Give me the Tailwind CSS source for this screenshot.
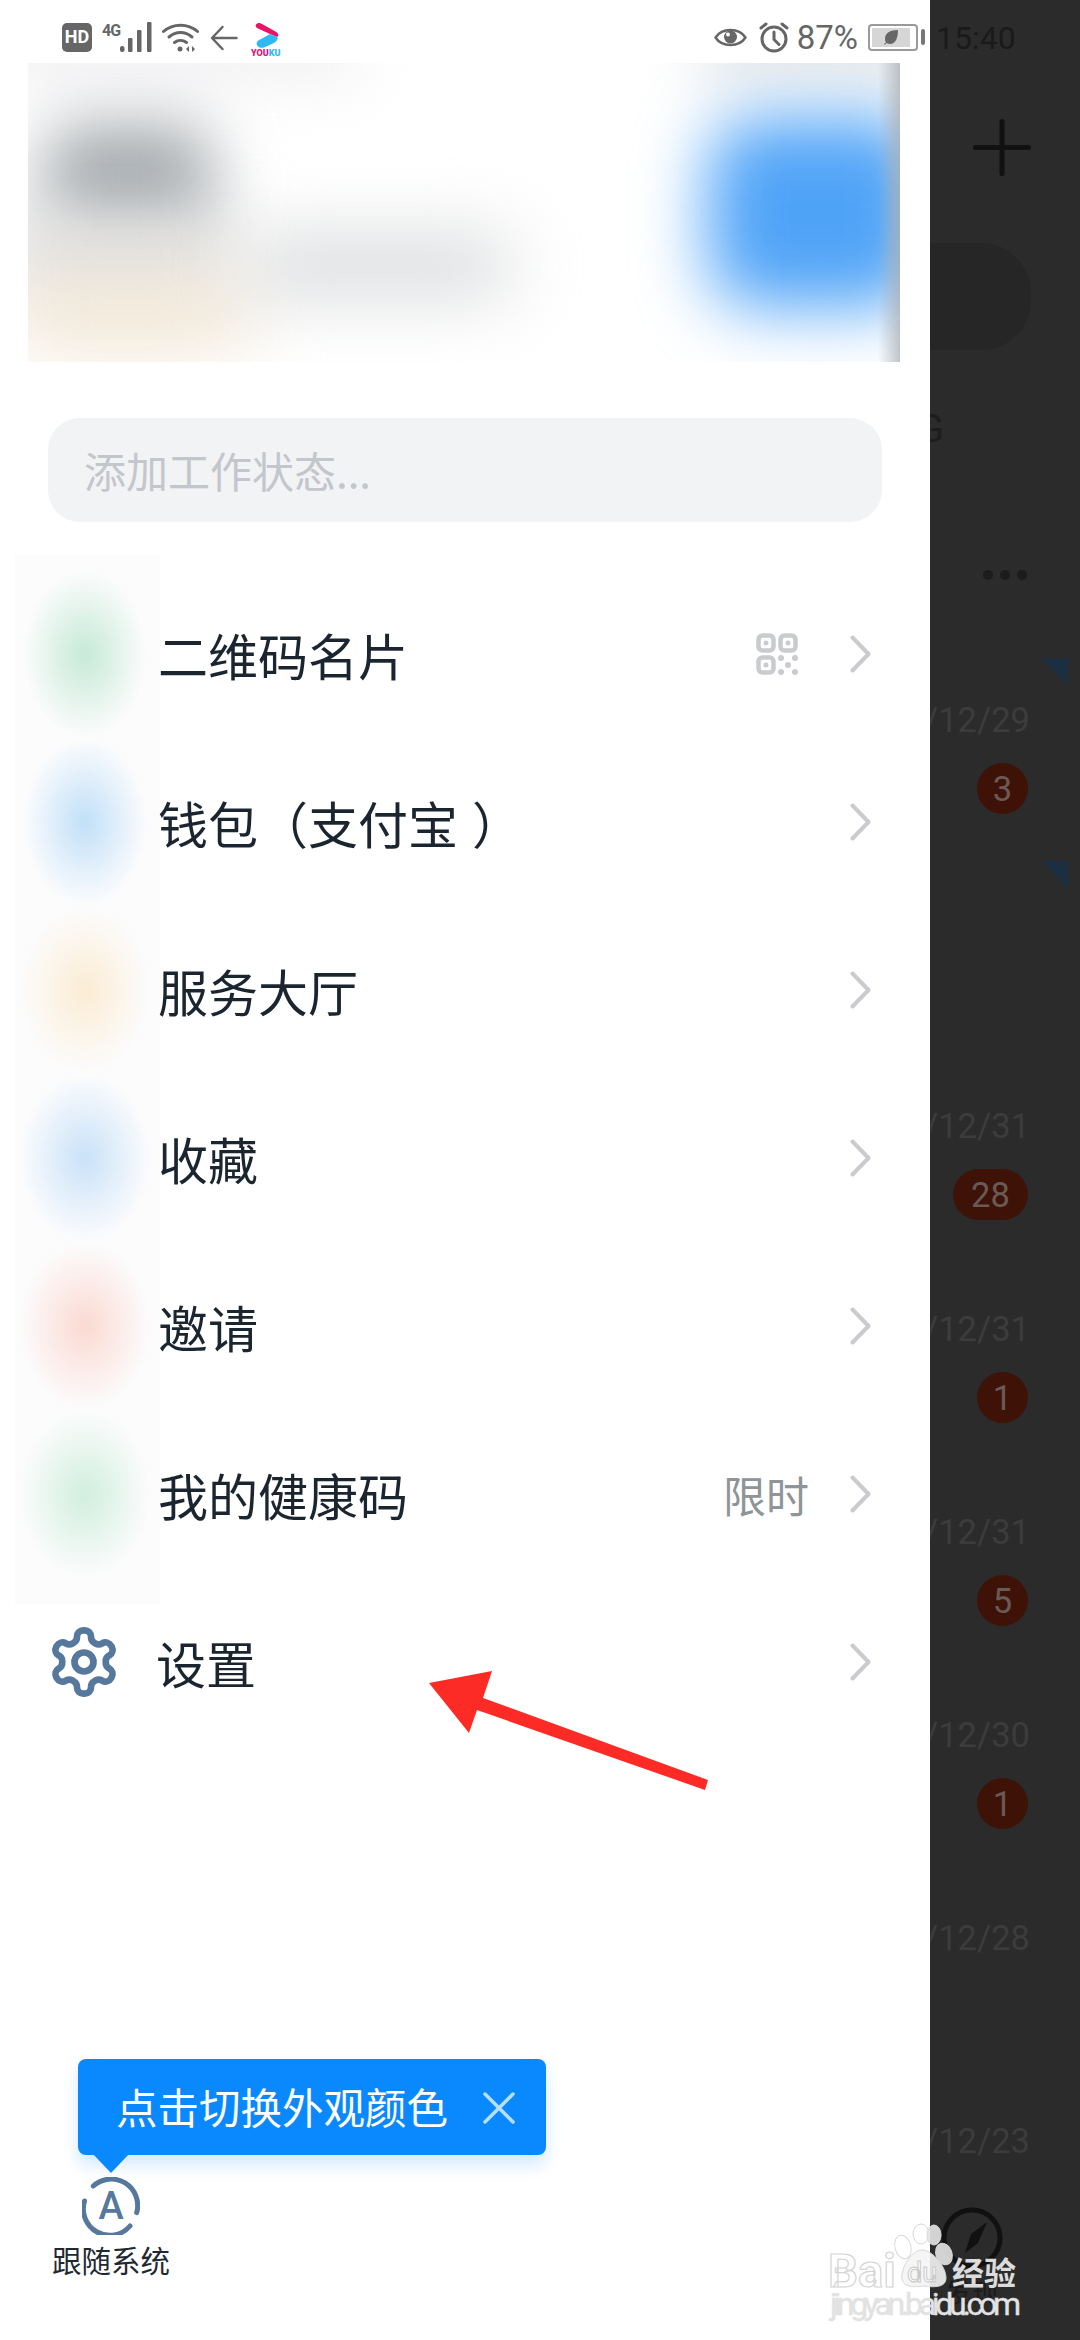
<!DOCTYPE html>
<html lang="zh-CN">
  <head>
    <meta charset="UTF-8" />
    <meta name="viewport" content="width=device-width, initial-scale=1.0" />
    <title>工作台菜单</title>
    <script src="https://cdn.jsdelivr.net/npm/@tailwindcss/browser@4"></script>
  </head>
  <body class="bg-white">
    <div class="relative flex w-[1080px] h-[2340px] overflow-hidden [font-family:'Noto_Sans_CJK_SC',sans-serif]">
      <!-- drawer -->
      <aside class="flex flex-col w-[930px] h-full bg-white">
        <!-- status bar, left and middle icons -->
        <div class="flex items-center h-[63px] pt-[12px] pl-[62px] pr-[5px] text-[#666] [font-family:Roboto,sans-serif]">
          <span class="flex items-center justify-center w-[30px] h-[29px] -mt-[1px] rounded-[5px] bg-[#666] text-white text-[18px] leading-none font-bold">HD</span>
          <span class="self-start mt-[11px] ml-[10px] w-[18px] text-[16px] leading-[15px] font-bold tracking-[-1px]">4G</span>
          <svg class="w-[32px] h-[30px] -mt-[1px]" viewBox="0 0 32 30" fill="#666">
            <rect x="0" y="24" width="4.500" height="6" rx="2" />
            <rect x="8" y="16" width="4.500" height="14" rx="1" />
            <rect x="17" y="8" width="4.500" height="22" rx="1" />
            <rect x="27" y="0" width="4.500" height="30" rx="1" />
          </svg>
          <svg class="w-[37px] h-[30px] ml-[10px]" viewBox="0 0 37 30" fill="none" stroke="#666" stroke-width="3" stroke-linecap="round">
            <path d="M1.500 8.500C11 0 26 0 35.500 8.500" />
            <path d="M7 14C14 8 23 8 30 14" />
            <path d="M12.500 19.500C16 16.800 21 16.800 24.500 19.500" />
            <circle cx="18" cy="26" r="2.500" fill="#666" stroke="none" />
            <path d="M27 23v6l-3-3zM30 23v6l3-3z" fill="#666" stroke="none" />
          </svg>
          <svg class="w-[28px] h-[26px] ml-[11px]" viewBox="0 0 28 26" fill="none" stroke="#666" stroke-width="2.500" stroke-linecap="round" stroke-linejoin="round">
            <path d="M12.500 2L2 13l10.500 11M2.500 13H26.500" />
          </svg>
          <svg class="w-[32px] h-[34px] ml-[12px] mt-[3px]" viewBox="0 0 32 34">
            <path d="M6 2.500C8 .5 9.500 .5 12 2L25.500 9.500C29 11.500 29 14 27 15L20 12L8 6.500C6 5.500 5 4 6 2.500z" fill="#ec1268" />
            <path d="M27 15C29 17 26 20 23 21.500L14 25.500C9 27 5.500 23 7 20C8 18 10 17.500 12 16.500L20 12z" fill="#2fb9f3" />
            <text x="1" y="33.500" font-size="9" font-weight="900" font-family="Roboto" fill="#e3127a">YOU<tspan fill="#2fb9f3">KU</tspan></text>
          </svg>
          <svg class="w-[33px] h-[25px] ml-auto" viewBox="0 0 33 25" fill="none" stroke="#666" stroke-width="2.500">
            <path d="M1.500 12.500C8 2.500 25 2.500 31.500 12.500C25 22.500 8 22.500 1.500 12.500z" stroke-linejoin="round" />
            <circle cx="16.500" cy="12" r="6.500" fill="#666" stroke="none" />
            <circle cx="14" cy="9.500" r="2" fill="#fff" stroke="none" />
          </svg>
          <svg class="w-[30px] h-[31px] ml-[12px] -mt-[1px]" viewBox="0 0 30 31" fill="none" stroke="#666" stroke-width="3" stroke-linecap="round">
            <circle cx="15" cy="17" r="12" />
            <path d="M15 10v7.500l5 5M2 6l5-4M28 6l-5-4" />
          </svg>
          <span class="ml-[8px] text-[33px] leading-none -mt-[1px]">87%</span>
          <span class="flex items-center justify-center ml-[10px] w-[50px] h-[27px] -mt-[1px] border-2 border-[#9a9a9a] rounded-[4px] p-[2px] pr-[6px]">
            <span class="flex items-center justify-center w-full h-full bg-[#d6d6d6]">
              <svg class="w-[16px] h-[16px]" viewBox="0 0 16 16" fill="#666"><path d="M15 1C7 1 2 4 2 10c0 1.500.5 2.500 1 3.500L1 15l.8.700L3.800 14C5 14.500 6 15 7 15c6 0 8-7 8-14z" /></svg>
            </span>
          </span>
          <span class="ml-[3px] w-[4px] h-[16px] -mt-[1px] rounded-[2px] bg-[#777]"></span>
        </div>

        <!-- blurred profile card -->
        <div class="relative mx-[28px] w-[872px] h-[299px] shrink-0 overflow-hidden bg-white">
          <div class="absolute -left-[30px] -top-[40px] w-[360px] h-[60px] bg-[#f1f1f3] blur-[30px]"></div>
          <div class="absolute left-[15px] top-[60px] w-[170px] h-[115px] rounded-[40px] bg-[#a6abaf] blur-[32px]"></div>
          <div class="absolute -left-[20px] top-[150px] w-[210px] h-[90px] bg-[#dfdfdf] blur-[34px]"></div>
          <div class="absolute -left-[10px] top-[215px] w-[230px] h-[70px] bg-[#f3e7d4] blur-[36px]"></div>
          <div class="absolute left-[220px] top-[175px] w-[260px] h-[55px] bg-[#d4d6d8] blur-[36px]"></div>
          <div class="absolute left-[670px] -top-[50px] w-[230px] h-[70px] bg-[#e6e8ea] blur-[30px]"></div>
          <div class="absolute left-[680px] top-[55px] w-[220px] h-[190px] rounded-[50px] bg-[#4fa3f7] blur-[34px]"></div>
          <div class="absolute right-0 top-0 w-[22px] h-full bg-gradient-to-r from-transparent to-[#a9adb2]/70"></div>
        </div>

        <!-- status input -->
        <div class="flex items-center mt-[56px] mx-[48px] w-[834px] h-[104px] shrink-0 pl-[36px] rounded-[32px] bg-[#f2f3f5] text-[#c3c6cb] text-[42px] leading-none">添加工作状态...</div>

        <!-- menu rows -->
        <div class="relative mt-[48px] shrink-0">
          <div class="absolute left-[15px] -top-[15px] w-[145px] h-[1049px] overflow-hidden bg-[#fcfcfd]">
            <div class="flex flex-col pt-[15px] w-[140px]">
              <div class="h-[168px] w-full bg-[radial-gradient(ellipse_62px_84px_at_center,#c9ead8_5%,#ffffff00_100%)]"></div>
              <div class="h-[168px] w-full bg-[radial-gradient(ellipse_62px_84px_at_center,#c4e1f8_5%,#ffffff00_100%)]"></div>
              <div class="h-[168px] w-full bg-[radial-gradient(ellipse_66px_84px_at_center,#fbedd6_5%,#ffffff00_100%)]"></div>
              <div class="h-[168px] w-full bg-[radial-gradient(ellipse_66px_84px_at_center,#cce3f8_5%,#ffffff00_100%)]"></div>
              <div class="h-[168px] w-full bg-[radial-gradient(ellipse_66px_84px_at_center,#fbdbd4_5%,#ffffff00_100%)]"></div>
              <div class="h-[168px] w-full bg-[radial-gradient(ellipse_66px_84px_at_center,#d3efdf_5%,#ffffff00_100%)]"></div>
            </div>
          </div>

          <div class="relative flex items-center h-[168px] pl-[158px] pr-[59px] text-[#1a2530] text-[50px]">
            <span>二维码名片</span>
            <svg class="ml-auto mr-[52px] w-[42px] h-[42px]" viewBox="0 0 42 42" fill="none" stroke="#c9cbcf" stroke-width="4.500">
              <rect x="2.500" y="2.500" width="15" height="15" rx="4" />
              <rect x="24.500" y="2.500" width="15" height="15" rx="4" />
              <rect x="2.500" y="24.500" width="15" height="15" rx="4" />
              <g fill="#c9cbcf" stroke="none">
                <circle cx="10" cy="10" r="2.500" />
                <circle cx="32" cy="10" r="2.500" />
                <circle cx="10" cy="32" r="2.500" />
                <circle cx="25" cy="25" r="3" />
                <circle cx="39" cy="25" r="3" />
                <circle cx="32" cy="32" r="3" />
                <circle cx="25" cy="39" r="3" />
                <circle cx="39" cy="39" r="3" />
              </g>
            </svg>
            <svg class="w-[21px] h-[38px]" viewBox="0 0 21 38" fill="none" stroke="#c9cbcf" stroke-width="4" stroke-linecap="round" stroke-linejoin="round"><path d="M2.500 2.500L18.500 19L2.500 35.500" /></svg>
          </div>
          <div class="relative flex items-center h-[168px] pl-[158px] pr-[59px] text-[#1a2530] text-[50px]">
            <span>钱包（支付宝<span class="ml-[14px]">）</span></span>
            <svg class="ml-auto w-[21px] h-[38px]" viewBox="0 0 21 38" fill="none" stroke="#c9cbcf" stroke-width="4" stroke-linecap="round" stroke-linejoin="round"><path d="M2.500 2.500L18.500 19L2.500 35.500" /></svg>
          </div>
          <div class="relative flex items-center h-[168px] pl-[158px] pr-[59px] text-[#1a2530] text-[50px]">
            <span>服务大厅</span>
            <svg class="ml-auto w-[21px] h-[38px]" viewBox="0 0 21 38" fill="none" stroke="#c9cbcf" stroke-width="4" stroke-linecap="round" stroke-linejoin="round"><path d="M2.500 2.500L18.500 19L2.500 35.500" /></svg>
          </div>
          <div class="relative flex items-center h-[168px] pl-[158px] pr-[59px] text-[#1a2530] text-[50px]">
            <span>收藏</span>
            <svg class="ml-auto w-[21px] h-[38px]" viewBox="0 0 21 38" fill="none" stroke="#c9cbcf" stroke-width="4" stroke-linecap="round" stroke-linejoin="round"><path d="M2.500 2.500L18.500 19L2.500 35.500" /></svg>
          </div>
          <div class="relative flex items-center h-[168px] pl-[158px] pr-[59px] text-[#1a2530] text-[50px]">
            <span>邀请</span>
            <svg class="ml-auto w-[21px] h-[38px]" viewBox="0 0 21 38" fill="none" stroke="#c9cbcf" stroke-width="4" stroke-linecap="round" stroke-linejoin="round"><path d="M2.500 2.500L18.500 19L2.500 35.500" /></svg>
          </div>
          <div class="relative flex items-center h-[168px] pl-[158px] pr-[59px] text-[#1a2530] text-[50px]">
            <span>我的健康码</span>
            <span class="ml-auto mr-[41px] text-[#8f9499] text-[43px]">限时</span>
            <svg class="w-[21px] h-[38px]" viewBox="0 0 21 38" fill="none" stroke="#c9cbcf" stroke-width="4" stroke-linecap="round" stroke-linejoin="round"><path d="M2.500 2.500L18.500 19L2.500 35.500" /></svg>
          </div>
          <div class="relative flex items-center h-[168px] pl-[46px] pr-[59px] text-[#1a2530] text-[50px]">
            <svg class="w-[76px] h-[76px] mr-[34px]" viewBox="0 0 24 24" fill="none" stroke="#55789c" stroke-width="2.100" stroke-linecap="round" stroke-linejoin="round">
              <path d="M12.220 2h-.44a2 2 0 0 0-2 2v.18a2 2 0 0 1-1 1.730l-.43.25a2 2 0 0 1-2 0l-.15-.08a2 2 0 0 0-2.730.73l-.22.38a2 2 0 0 0 .73 2.730l.15.1a2 2 0 0 1 1 1.720v.51a2 2 0 0 1-1 1.740l-.15.09a2 2 0 0 0-.73 2.730l.22.38a2 2 0 0 0 2.730.73l.15-.08a2 2 0 0 1 2 0l.43.25a2 2 0 0 1 1 1.730V20a2 2 0 0 0 2 2h.44a2 2 0 0 0 2-2v-.18a2 2 0 0 1 1-1.730l.43-.25a2 2 0 0 1 2 0l.15.08a2 2 0 0 0 2.730-.73l.22-.39a2 2 0 0 0-.73-2.730l-.15-.08a2 2 0 0 1-1-1.740v-.5a2 2 0 0 1 1-1.740l.15-.09a2 2 0 0 0 .73-2.730l-.22-.38a2 2 0 0 0-2.730-.73l-.15.08a2 2 0 0 1-2 0l-.43-.25a2 2 0 0 1-1-1.730V4a2 2 0 0 0-2-2z" />
              <circle cx="12" cy="12" r="3" />
            </svg>
            <span>设置</span>
            <svg class="ml-auto w-[21px] h-[38px]" viewBox="0 0 21 38" fill="none" stroke="#c9cbcf" stroke-width="4" stroke-linecap="round" stroke-linejoin="round"><path d="M2.500 2.500L18.500 19L2.500 35.500" /></svg>
          </div>
        </div>

        <!-- appearance tip and follow-system button -->
        <div class="mt-[313px] ml-[78px] relative flex items-center w-[468px] h-[96px] shrink-0 pl-[38px] rounded-[8px] bg-[#0a89ff] text-white text-[41.500px] leading-none shadow-[0_10px_16px_rgba(10,137,255,0.18)]">
          <span>点击切换外观颜色</span>
          <svg class="absolute left-[405px] top-[33px] w-[32px] h-[32px]" viewBox="0 0 32 32" fill="none" stroke="#b9dfff" stroke-width="3.500" stroke-linecap="round"><path d="M2 2L30 30M30 2L2 30" /></svg>
          <span class="absolute left-[15px] -bottom-[18px] w-0 h-0 border-l-[18px] border-r-[18px] border-t-[19px] border-l-transparent border-r-transparent border-t-[#0a89ff]"></span>
        </div>
        <div class="flex flex-col items-center ml-[52px] w-[118px] mt-[22px]">
          <svg class="w-[58px] h-[58px]" viewBox="0 0 58 58" fill="none" stroke="#55789c" stroke-width="5" stroke-linecap="round">
            <path d="M11.300 9A26.500 26.500 0 0 1 54.700 35.700" />
            <path d="M48 49A26.500 26.500 0 0 1 2.500 24" />
            <text x="29" y="42" text-anchor="middle" font-size="38" font-weight="500" font-family="Roboto" fill="#55789c" stroke="none">A</text>
          </svg>
          <span class="mt-[9px] text-[#1f2933] text-[29.500px] leading-[30px] whitespace-nowrap">跟随系统</span>
        </div>
      </aside>

      <!-- dimmed conversation list -->
      <main class="flex flex-col w-[150px] h-full bg-[#2b2b2b] overflow-hidden [font-family:Roboto,sans-serif]">
        <div class="flex items-center h-[63px] pt-[12px] shrink-0 pl-[6px] text-[#1a1a1a] text-[32px] leading-none">15:40</div>
        <div class="flex justify-end mt-[56px] pr-[49px] shrink-0">
          <svg class="w-[58px] h-[57px]" viewBox="0 0 58 57" fill="none" stroke="#111" stroke-width="5" stroke-linecap="round"><path d="M29 2.500V54.500M2.500 28.500H55.500" /></svg>
        </div>
        <div class="mt-[67px] w-[101px] h-[107px] shrink-0 rounded-r-[50px] bg-[#262626]"></div>
        <div class="mt-[58px] -ml-[12px] h-[42px] shrink-0 text-[#1d1d1d] text-[38px] leading-[42px]">G</div>
        <div class="flex gap-[7px] mt-[120px] pl-[53px] shrink-0">
          <span class="w-[10px] h-[10px] rounded-full bg-[#1c1c1c]"></span>
          <span class="w-[10px] h-[10px] rounded-full bg-[#1c1c1c]"></span>
          <span class="w-[10px] h-[10px] rounded-full bg-[#1c1c1c]"></span>
        </div>
        <div class="mt-[66px] border-t border-[#292929] h-[1535px] shrink-0 overflow-hidden text-[#3c3c3c] text-[34.500px] leading-[40px]">
          <div class="relative flex flex-col items-end h-[203px] pt-[53px] pr-[50px]">
            <svg class="absolute right-[12px] top-[11px] w-[26px] h-[26px]" viewBox="0 0 26 26" fill="#1b2f40"><path d="M1 0H24a2 2 0 0 1 2 2V24a2 2 0 0 1-3 1L1 2a1 1 0 0 1 0-2z" /></svg>
            <span class="whitespace-nowrap">/12/29</span>
            <span class="flex items-center justify-center mt-[23px] mr-[2px] w-[51px] h-[51px] rounded-full bg-[#3e1206] text-[#6a5a56]">3</span>
          </div>
          <div class="relative flex flex-col items-end h-[203px] pt-[53px] pr-[50px]">
            <svg class="absolute right-[12px] top-[11px] w-[26px] h-[26px]" viewBox="0 0 26 26" fill="#1b2f40"><path d="M1 0H24a2 2 0 0 1 2 2V24a2 2 0 0 1-3 1L1 2a1 1 0 0 1 0-2z" /></svg>
          </div>
          <div class="relative flex flex-col items-end h-[203px] pt-[53px] pr-[50px]">
            <span class="whitespace-nowrap">/12/31</span>
            <span class="flex items-center justify-center mt-[23px] mr-[2px] w-[75px] h-[51px] rounded-full bg-[#3e1206] text-[#6a5a56]">28</span>
          </div>
          <div class="relative flex flex-col items-end h-[203px] pt-[53px] pr-[50px]">
            <span class="whitespace-nowrap">/12/31</span>
            <span class="flex items-center justify-center mt-[23px] mr-[2px] w-[51px] h-[51px] rounded-full bg-[#3e1206] text-[#6a5a56]">1</span>
          </div>
          <div class="relative flex flex-col items-end h-[203px] pt-[53px] pr-[50px]">
            <span class="whitespace-nowrap">/12/31</span>
            <span class="flex items-center justify-center mt-[23px] mr-[2px] w-[51px] h-[51px] rounded-full bg-[#3e1206] text-[#6a5a56]">5</span>
          </div>
          <div class="relative flex flex-col items-end h-[203px] pt-[53px] pr-[50px]">
            <span class="whitespace-nowrap">/12/30</span>
            <span class="flex items-center justify-center mt-[23px] mr-[2px] w-[51px] h-[51px] rounded-full bg-[#3e1206] text-[#6a5a56]">1</span>
          </div>
          <div class="relative flex flex-col items-end h-[203px] pt-[53px] pr-[50px]">
            <span class="whitespace-nowrap">/12/28</span>
          </div>
          <div class="relative flex flex-col items-end h-[203px] pt-[53px] pr-[50px]">
            <span class="whitespace-nowrap">/12/23</span>
          </div>
        </div>
        <div class="flex flex-col border-t border-[#292929] pl-[11px] pt-[25px] shrink-0">
          <svg class="w-[62px] h-[62px]" viewBox="0 0 62 62" fill="none" stroke="#111" stroke-width="5">
            <circle cx="31" cy="31" r="28" />
            <path d="M46 15L37 36L24 46L30 27z" fill="#111" stroke="none" />
          </svg>
          <span class="mt-[8px] pl-[4px] text-[#1c1c1c] text-[27px] leading-[30px] [font-family:'Noto_Sans_CJK_SC',sans-serif]">发现</span>
        </div>
      </main>

      <!-- red annotation arrow -->
      <svg class="absolute left-[429px] top-[1671px] w-[280px] h-[120px]" viewBox="429 1671 280 120" fill="#fd2b26">
        <polygon points="429,1683 492,1671 483,1698 708,1780 705,1790 477,1710 469,1733" />
      </svg>

      <!-- baidu watermark -->
      <svg class="absolute left-[810px] top-[2190px] w-[230px] h-[140px]" viewBox="0 0 230 140">
        <g fill="#e6e6e6" fill-opacity="0.9" stroke="#d8d8d8" stroke-width="1">
          <ellipse cx="93" cy="57" rx="8" ry="12" transform="rotate(-15 93 57)" fill="#fff" />
          <ellipse cx="111" cy="44" rx="8" ry="10" fill="#fff" />
          <ellipse cx="124" cy="45" rx="7" ry="10" />
          <ellipse cx="134" cy="64" rx="8" ry="11" transform="rotate(-20 134 64)" />
          <path d="M112 60C122 60 136 76 136 88C136 96 128 98 114 96C100 98 90 96 92 84C94 72 104 60 112 60z" fill="#f4f4f4" />
        </g>
        <text x="97" y="92" font-size="27" font-family="Roboto" fill="#fff" stroke="#c8c8c8" stroke-width="1">du</text>
        <text x="18" y="97" font-size="47" font-weight="700" font-family="Roboto" fill="#fff" stroke="#d4d4d4" stroke-width="1.200">Bai</text>
        <text x="142" y="95" font-size="32" font-weight="700" font-family="'Noto Sans CJK SC'" fill="#dcdcdc">经验</text>
        <text x="20" y="125" font-size="32" font-family="Roboto" fill="#e2e2e2" stroke="#e2e2e2" stroke-width="0.400" textLength="191">jingyan.baidu.com</text>
      </svg>
    </div>
  </body>
</html>
